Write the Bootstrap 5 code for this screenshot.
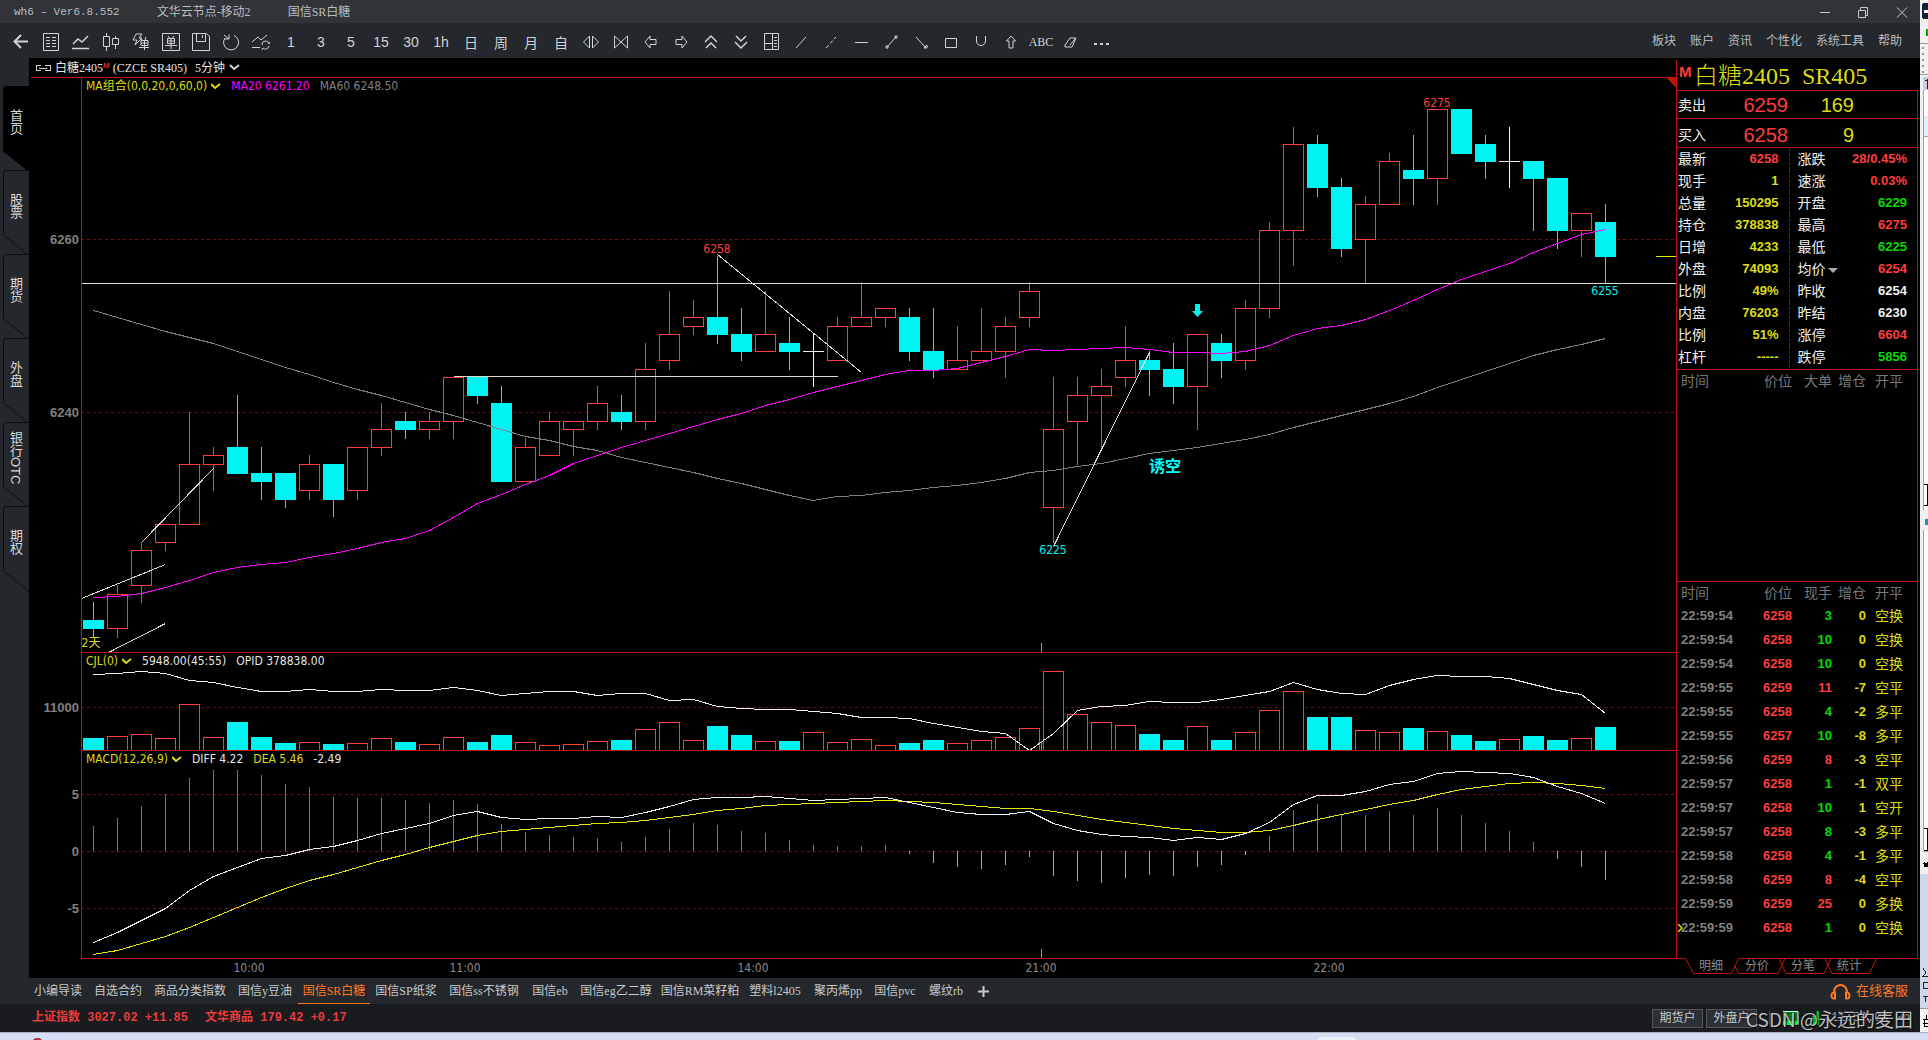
<!DOCTYPE html>
<html lang="zh-CN">
<head>
<meta charset="utf-8">
<meta name="viewport" content="width=device-width, initial-scale=1">
<title>wh6 - 国信SR白糖</title>
<link href="https://cdn.jsdelivr.net/npm/bootstrap@5.3.0/dist/css/bootstrap.min.css" rel="stylesheet">
<style>
:root{--line:#be140a;--up:#ff3c3c;--dn:#00f3f3;--ylw:#dcdc14;--grn:#00dc00;--song:"Liberation Serif","Noto Sans CJK SC",serif;--tah:"DejaVu Sans Condensed","Noto Sans CJK SC",sans-serif;--ari:"Liberation Sans","Noto Sans CJK SC",sans-serif}
html,body{height:100%}
body{background:#d5def4;font-family:var(--song);font-size:12px;line-height:16px;color:#c8c8c8;overflow:hidden}
button{background:none;border:0;padding:0;color:inherit;font:inherit}
a{color:inherit;text-decoration:none}
svg{display:block}
.ico{fill:none;stroke:#d2d2d2;stroke-width:1}
.titlebar{height:23px;background:#303338;color:#b9bcc0}
.titlebar .ttl{padding-left:14px;gap:37px}
.titlebar .ver{font:11px/16px "Liberation Mono",monospace}
.toolbar-wh{height:35px;background:#24272b}
.tools{padding:3px 0 0 6px}
.tools button{width:30px;height:30px;display:flex;align-items:center;justify-content:center;color:#d2d2d2;font:14px/16px "Noto Sans CJK SC",sans-serif}
.tools .num{font:14px/16px "Liberation Sans",sans-serif}
.menus{gap:14px;padding-right:18px;color:#b9bcc0}
.side{width:29px;background:#24272b;padding-top:28px;flex:none}
.side button{width:26px;height:84px;margin-left:3px;position:relative;display:block}
.side button span{position:absolute;left:0;top:0;width:24px;height:72px;display:flex;align-items:center;justify-content:center;writing-mode:vertical-rl;font:13px/24px var(--ari);color:#d8d8d8}
.side svg{overflow:visible}
.stage{background:#000}
.contract{height:19px;padding-left:6px;color:#e6e6e6}
.contract .sup-m{font:bold 8px/8px var(--ari);color:#c83232;align-self:flex-start;margin:4px 3px 0 0}
.contract button{margin-left:8px}
.panel-k{position:relative;min-height:0;font-family:var(--tah)}
.panel-k>svg{position:absolute;inset:0;width:100%;height:100%}
.legend-k{position:absolute;left:57px;top:1px;gap:10px;line-height:16px;color:#e6e6e6}
.y{color:var(--ylw)}.r{color:var(--up)}.g{color:var(--grn)}.w{color:#f0f0f0}
.timeaxis{height:20px;flex:none;position:relative}
.timeaxis svg{width:100%;height:20px}
.ax{font:bold 13px "Liberation Sans",sans-serif;fill:#808080}
.tx{font:12px "DejaVu Sans Condensed","Noto Sans CJK SC",sans-serif}
.quote{width:244px;flex:none}
.qbox{border-left:1px solid var(--line);margin-top:2px;width:242px}
.qname{height:30px;padding-left:2px;color:var(--ylw);font-size:24px;line-height:32px;font-weight:300;white-space:nowrap}
.qname b{font:bold 15px/24px "Liberation Sans",sans-serif;color:var(--up);width:15px}
.frame-r{border-top:1px solid var(--line);border-right:1px solid var(--line)}
.ask{padding-left:1px;font:14px/16px var(--ari);color:#f0f0f0}
.ask output{font-size:20px;text-align:right}
.ask .p{width:82px}.ask .v{width:66px}
.lab,.flds,.ticks{font:14px/16px var(--ari)}
.flds,.ticks{width:100%;table-layout:fixed;border-collapse:collapse;color:#f0f0f0}
.flds{height:220px}
.flds th,.flds td,.ticks th,.ticks td{padding:0;font-weight:normal;white-space:nowrap}
.flds th{padding-left:1px}
.flds td{text-align:right;font-weight:bold;font-size:13px}
.flds td:nth-child(2){padding-right:10px;border-right:1px dashed #b40000}
.flds td:last-child{padding-right:10px}
.flds th:nth-child(3){padding-left:8px}
.tri{display:inline-block;border:5px solid transparent;border-top-color:#aaa;border-bottom:0;margin:0 0 1px 2px}
.ticks thead th{color:#787878;height:22px;text-align:right}
.ticks thead th:first-child,.ticks thead th:last-child{text-align:left}
.ticks tbody td{height:24px;text-align:right;font-weight:bold;font-size:13px;position:relative}
.ticks tbody td:first-child{text-align:left;color:#808080}
.ticks tr>:first-child{padding-left:4px}
.ticks tr>:last-child{padding-left:9px}
.ticks tbody td:last-child{text-align:left;font-weight:normal;font-size:14px;color:var(--ylw)}
.cur-m{position:absolute;left:0;top:8px}
.dtabs{height:20px;position:relative;padding-left:12px;color:#8c8c8c;flex:none}
.dtabs svg{position:absolute;left:0;top:0}
.dtabs button{width:46px;height:16px;position:relative}
.pages{height:26px;background:#24272b;padding-left:28px;flex:none}
.pages a{text-align:center;line-height:26px;height:26px;white-space:nowrap}
.pages a.on{color:#ff7a1e;border-bottom:1px solid #ff7a1e}
.service{color:#ff7a1e;font:13px/16px var(--ari);gap:5px;padding-right:12px}
.status{height:28px;background:#1a1b1f;padding-left:32px;gap:17px;flex:none;font:bold 12px/16px "Liberation Mono","Noto Sans CJK SC",monospace;color:#e63c3c;position:relative}
.status .accts{gap:3px}
.acct{width:51px;height:19px;border:1px solid #55575a!important;background:#2c3036!important;color:#c8c8c8!important;font:12px/16px var(--ari)!important}
.conn{width:160px;gap:12px;padding-left:9px;font:12px/16px "Liberation Mono",monospace;color:#8f9db8}
.mark-wm{position:absolute;right:7px;top:0;font:19px/30px "Noto Sans CJK SC",sans-serif;color:rgba(255,255,255,.72);text-shadow:1px 1px 1px #000;white-space:nowrap}
.behind{width:8px;flex:none;background:#fff;overflow:hidden}
.taskbar{height:8px;flex:none;border-top:1px solid #a8b0c0;background:#d5def4;position:relative;overflow:hidden}
.taskbar i{position:absolute}
</style>
</head>
<body class="d-flex flex-column">
<div class="d-flex flex-fill" style="min-height:0">
<div class="d-flex flex-column flex-fill" style="min-width:0">
  <header class="titlebar d-flex align-items-center justify-content-between">
    <div class="ttl d-flex"><span class="ver">wh6 – Ver6.8.552</span><span>文华云节点-移动2</span><span>国信SR白糖</span></div>
    <svg class="ico me-2" width="96" height="20" style="stroke:#c8c8c8"><path d="M4 10.5h10M42.5 8.500h7v7h-7zM44.500 8V5.500h7v8H50M81 5.500l10 10M91 5.500l-10 10"/></svg>
  </header>
  <nav class="toolbar-wh d-flex align-items-center justify-content-between">
    <div class="tools d-flex" id="tools"></div>
    <div class="menus d-flex"><a href="#">板块</a><a href="#">账户</a><a href="#">资讯</a><a href="#">个性化</a><a href="#">系统工具</a><a href="#">帮助</a></div>
  </nav>
  <div class="d-flex flex-fill" style="min-height:0">
    <aside class="side" id="side"></aside>
    <main class="stage d-flex flex-column flex-fill" style="min-width:0">
      <div class="contract d-flex align-items-center">
        <svg class="ico" width="20" height="12" shape-rendering="crispEdges"><path d="M6 3.500H1v5h5M10 3.500h5v5h-5M4 6h8"/></svg>
        <span>白糖2405</span><span class="sup-m">M</span><span>(CZCE SR405)</span>
        <button class="d-flex align-items-center">5分钟<svg class="ico ms-1" width="12" height="8" style="stroke-width:2"><path d="M1 1l4 4 5-4"/></svg></button>
      </div>
      <div class="panel-k" style="flex:575 1 0"><svg id="price"></svg>
        <div class="legend-k d-flex"><span class="y d-flex align-items-center">MA组合(0,0,20,0,60,0)<svg class="ico ms-1" width="10" height="7" style="stroke:#dcdc14;stroke-width:2"><path d="M0 1l4 4 5-4"/></svg></span><span style="color:#f0f">MA20 6261.20</span><span style="color:#808080">MA60 6248.50</span></div>
      </div>
      <div class="panel-k" style="flex:98 1 0"><svg id="vol"></svg>
        <div class="legend-k d-flex"><span class="y d-flex align-items-center">CJL(0)<svg class="ico ms-1" width="10" height="7" style="stroke:#dcdc14;stroke-width:2"><path d="M0 1l4 4 5-4"/></svg></span><span>5948.00(45:55)</span><span>OPID 378838.00</span></div>
      </div>
      <div class="panel-k" style="flex:208 1 0"><svg id="macd"></svg>
        <div class="legend-k d-flex"><span class="y d-flex align-items-center">MACD(12,26,9)<svg class="ico ms-1" width="10" height="7" style="stroke:#dcdc14;stroke-width:2"><path d="M0 1l4 4 5-4"/></svg></span><span>DIFF 4.22</span><span class="y">DEA 5.46</span><span>-2.49</span></div>
      </div>
      <div class="timeaxis"><svg id="taxis"></svg></div>
    </main>
    <section class="quote stage d-flex flex-column">
      <div class="qbox d-flex flex-column flex-fill" style="min-height:0">
        <div class="qname d-flex"><b>M</b><span>白糖2405&nbsp; SR405</span></div>
        <div class="ask frame-r d-flex align-items-center" style="height:28px"><span>卖出</span><output class="p r">6259</output><output class="v y">169</output></div>
        <div class="ask frame-r d-flex align-items-center pt-1" style="height:29px"><span>买入</span><output class="p r">6258</output><output class="v y">9</output></div>
        <div class="frame-r" style="height:222px">
          <table class="flds"><colgroup><col style="width:40px"><col style="width:72px"><col style="width:50px"><col></colgroup><tbody id="flds"></tbody></table>
        </div>
        <div class="frame-r flex-fill">
          <table class="ticks"><colgroup><col style="width:75px"><col style="width:40px"><col style="width:40px"><col style="width:34px"><col></colgroup><thead><tr><th>时间</th><th>价位</th><th>大单</th><th>增仓</th><th>开平</th></tr></thead></table>
        </div>
        <div class="frame-r" style="height:377px">
          <table class="ticks"><colgroup><col style="width:75px"><col style="width:40px"><col style="width:40px"><col style="width:34px"><col></colgroup><thead><tr><th>时间</th><th>价位</th><th>现手</th><th>增仓</th><th>开平</th></tr></thead><tbody id="ticks"></tbody></table>
        </div>
      </div>
      <div class="dtabs d-flex">
        <svg width="244" height="20" fill="none" stroke="#be140a"><path d="M0 .5H9.500L17.500 15.500H55.500L62.500.5H241.500M58.500 7.500L62.500 15.500H102L109 .5M103 .5L110 15.500H148L155 .5M149 .5L156 15.500H193.500L200.500.5"/></svg>
        <button>明细</button><button>分价</button><button>分笔</button><button>统计</button>
      </div>
    </section>
  </div>
  <nav class="pages d-flex align-items-center"><div class="d-flex" id="pages"></div>
    <a href="#" class="service d-flex align-items-center ms-auto"><svg width="21" height="17" fill="none" stroke="#ff7a1e" stroke-width="2"><path d="M4 10V9a6.500 7 0 0 1 13 0v1M5 9.500c-4-1-5 6-1 6h1zM16 9.500c4-1 5 6 1 6h-1z"/></svg><span>在线客服</span></a>
  </nav>
  <footer class="status d-flex align-items-center">
    <span>上证指数 3027.02 +11.85</span><span>文华商品 179.42 +0.17</span>
    <div class="accts d-flex ms-auto align-items-center"><button class="acct">期货户</button><button class="acct">外盘户</button>
      <div class="conn d-flex align-items-center"><svg width="50" height="16"><path d="M.5 1v14" stroke="#e00"/><rect x="14" y="1" width="15" height="14" fill="#0a7a1e"/><path d="M14 1.500h15v13" fill="none" stroke="#dfe" /><path d="M14 13h14" stroke="#0f3" stroke-width="4"/><path d="M16 3v9M19 3v9M22 3v9M25 3v9" stroke="#031" stroke-dasharray="1 2"/><path d="M45 15V6M49 15V1" stroke="#0b3" stroke-width="3"/></svg><span>11:59:04 wh</span></div></div>
    <div class="mark-wm">CSDN @永远的麦田</div>
  </footer>
</div>
<div class="behind"><svg width="8" height="1032" shape-rendering="crispEdges">
  <rect width="8" height="77" fill="#f0f0f0"/><rect x="2" y="3" width="9" height="16" rx="3" fill="#14203c"/><path d="M4 11h4" stroke="#fff" stroke-width="3"/><path d="M7 29v7" stroke="#0a0" stroke-width="2"/>
  <path d="M0 43.500h8M0 74.500h8M3.500 90v760M3 136.500h5M0 851.500h8" stroke="#a0a0a0"/><path d="M3 47v26" stroke="#999" stroke-width="2" stroke-dasharray="2 4"/>
  <rect width="3" height="775" y="77" fill="#f0f0f0"/><rect x="3" y="77" width="5" height="13" fill="#c4d0e2"/><path d="M7 79v10M5 80h3" stroke="#222"/><rect x="4" y="116" width="4" height="20" fill="#e0efff"/>
  <path d="M4 484h3v21H4M4 828h3v22H4" fill="none" stroke="#000"/><rect y="510" width="8" height="20" fill="#f0f0f0"/><rect x="5" y="519" width="3" height="6" fill="#28c"/>
  <rect y="852" width="8" height="22" fill="#f0f0f0"/><path d="M4 863l4 4M4 867l4-4" stroke="#000" stroke-width="2"/><rect y="874" width="8" height="134" fill="#ccd9e9"/>
  <path d="M3 968l3 5-3 3h5M3 982h5v6H3zM3 996h5M5 996v6" fill="none" stroke="#222"/><rect y="1008" width="8" height="24" fill="#f4f4f4"/><path d="M0 1008.500h8" stroke="#999"/><path d="M3 1019h5M3 1023h5M4 1019v7h4M6 1015v5" fill="none" stroke="#000"/>
</svg></div>
</div>
<div class="taskbar"><i style="left:32px;top:5px;width:11px;height:10px;border-radius:5px;background:#b03030"></i><i style="left:1318px;top:4px;width:38px;height:8px;border-radius:4px;background:#eef2fb"></i></div>
<script src="https://cdn.jsdelivr.net/npm/bootstrap@5.3.0/dist/js/bootstrap.bundle.min.js"></script>
<script>
const $=id=>document.getElementById(id);
/* toolbar */
const P=(d,x='')=>`<svg class="ico" width="18" height="18" viewBox="0 0 18 18" ${x}><path d="${d}"/></svg>`;
const T=t=>({t});
const tools=[
 ['返回',P('M16 8.500H3M9 2L2.500 8.500 9 15','style="stroke-width:2"')],
 ['报价',P('M1.500.5h15v17h-15zM4 4.500h4M10 4.500h4M4 7.500h4M10 7.500h4M4 10.500h4M10 10.500h4M4 13.500h4M10 13.500h4')],
 ['分时',P('M1 11l5-5 4 3 6-6M0 15.500h17','style="stroke-width:1.500"')],
 ['K线',P('M4.500 0v3M4.500 14v4M1.500 3.500h6v10h-6zM13.500 3v3M13.500 11v5M10.500 5.500h6v6h-6z')],
 ['闪电',P('M4 1h6L7 5h3l-7 7 2-5H1zM9 5l1 2M14 4l-1 3M9 7.500h7v5H9zM9 10h7M12.500 7v10M7 14.500h10')],
 ['下单',P('M.5.5h17v17H.5zM6 3l1.500 2M12 3l-1.500 2M5.500 5.500h7v5h-7zM5 8h8M9 5v11M3 12.500h12')],
 ['保存',P('M.5.500h14l3 3v14H.5zM4.500.5v8h9v-8M10.500 2v3')],
 ['刷新',P('M7 1.500v4.500H2M2 2l5 4M12 2.500a7.500 7.500 0 1 1-9 2.500')],
 ['恢复',P('M0 9l6-5 3 3 6-5M0 14.500h8M10 12a3.500 3.500 0 0 1 7-1l1-2M17 13a3.500 3.500 0 0 1-6 2l-1 2')],
 T('1'),T('3'),T('5'),T('15'),T('30'),T('1h'),T('日'),T('周'),T('月'),T('自'),
 ['放大',P('M7.500 3v12L1.500 9zM10.500 3v12l6-6z')],
 ['缩小',P('M2.500 3v12l6.500-6zM15.500 3v12L9 9z')],
 ['左移',P('M3 9l5-6v3.500h6v5H8V15z')],
 ['右移',P('M15 9l-5-6v3.500H4v5h6V15z')],
 ['上翻',P('M3 9l6-6 6 6M4 15l5-5 5 5','style="stroke-width:1.500"')],
 ['下翻',P('M3 9l6 6 6-6M4 3l5 5 5-5','style="stroke-width:1.500"')],
 ['布局',P('M2.500.5h14v16h-14zM10.500 0v17M2 10.500h8M12 4.500h3M12 7.500h3M12 10.500h3M12 13.500h3')],
 ['直线',P('M4 15L14 4')],
 ['虚线',P('M4 15L14 4','stroke-dasharray="4 2"')],
 ['水平线',P('M3 9.500h13')],
 ['线段',P('M5 14L14 4'+'M4 13h2v2H4zM13 3h2v2h-2z')],
 ['射线',P('M4 4l10 11M12 15h3v-3z')],
 ['矩形',P('M3.500 5.500h11v9h-11z')],
 ['弧线',P('M4.500 3v5c0 6 9 6 9 0V3')],
 ['上箭头',P('M9 3l4.500 5H11v7H7V8H4.500z')],
 T('ABC'),
 ['橡皮',P('M3 12l5-7h6l-4 9H3zM8 12l5-6')],
 ['更多',P('M2 11h3M8 11h3M14 11h3','style="stroke-width:2"')]
];
$('tools').innerHTML=tools.map(t=>t.t?`<button class="${/^[\dh]/.test(t.t)?'num':''}"${t.t=='ABC'?' style="font:12px Liberation Serif,serif"':''}>${t.t}</button>`:`<button aria-label="${t[0]}">${t[1]}</button>`).join('');
$('side').innerHTML=['首页','股票','期货','外盘','银行OTC','期权'].map((t,i)=>`<button><svg width="26" height="87"><path d="M26 .5H3Q.5.5.5 3V65L26 85.500" fill="${i?'#24272b':'#000'}" stroke="${i?'#0c0d0f':'#000'}"/></svg><span>${t}</span></button>`).join('');
/* page tabs: 12px per Han character, 6px per Latin one */
const names=['小编导读','自选合约','商品分类指数','国信y豆油','国信SR白糖','国信SP纸浆','国信ss不锈钢','国信eb','国信eg乙二醇','国信RM菜籽粕','塑料l2405','聚丙烯pp','国信pvc','螺纹rb'];
$('pages').innerHTML=names.map(n=>{let w=12;for(const c of n)w+=c.charCodeAt(0)>255?12:6;return `<a href="#" class="${n=='国信SR白糖'?'on':''}" style="width:${w}px">${n}</a>`}).join('')+'<a href="#" aria-label="添加" class="d-flex align-items-center ms-2"><svg width="11" height="11"><path d="M0 5.500h11M5.500 0v11" stroke="#c8c8c8" stroke-width="2"/></svg></a>';
/* quote fields */
$('flds').innerHTML=[
['最新','6258','r','涨跌','28/0.45%','r'],['现手','1','y','速涨','0.03%','r'],['总量','150295','y','开盘','6229','g'],['持仓','378838','y','最高','6275','r'],['日增','4233','y','最低','6225','g'],['外盘','74093','y','均价<span class="tri"></span>','6254','r'],['比例','49%','y','昨收','6254','w'],['内盘','76203','y','昨结','6230','w'],['比例','51%','y','涨停','6604','r'],['杠杆','-----','y','跌停','5856','g']
].map(f=>`<tr><th>${f[0]}</th><td class="${f[2]}">${f[1]}</td><th>${f[3]}</th><td class="${f[5]}">${f[4]}</td></tr>`).join('');
$('ticks').innerHTML=['54 6258 g3 0 空换','54 6258 g10 0 空换','54 6258 g10 0 空换','55 6259 r11 -7 空平','55 6258 g4 -2 多平','55 6257 g10 -8 多平','56 6259 r8 -3 空平','57 6258 g1 -1 双平','57 6258 g10 1 空开','57 6258 g8 -3 多平','58 6258 g4 -1 多平','58 6259 r8 -4 空平','59 6259 r25 0 多换','59 6258 g1 0 空换'].map((s,i)=>{const a=s.split(' ');return `<tr><td>${i==13?'<svg class="cur-m" width="6" height="8" fill="none" stroke="#dcdc14" stroke-width="1.500"><path d="M1 0l4 4-4 4"/></svg>':''}22:59:${a[0]}</td><td class="r">${a[1]}</td><td class="${a[2][0]}">${a[2].slice(1)}</td><td class="y">${a[3]}</td><td>${a[4]}</td></tr>`}).join('');

/* candles: colour, body top, body bottom, high, low (offset from 6200) */
const K=`c16,15,18,14 r19,15,20,14 r24,20,25,18 r27,25,27,24 r34,27,40,27 r35,34,36,31 c36,33,42,33 c33,32,36,30 c33,30,33,29 r34,31,35,30 c34,30,34,28 r36,31,36,30 r38,36,41,35 c39,38,40,37 r39,38,40,37 r44,39,44,37 c44,42,44,41 c41,32,43,32 r36,32,37,32 r39,35,40,35 r39,38,39,35 r41,39,43,38 c40,39,42,38 r45,39,48,38 r49,46,54,45 r51,50,53,49 c51,49,58,48 c49,47,52,46 r49,47,54,47 c48,47,51,45 w47,47,49,43 r50,46,51,46 r51,50,55,50 r52,51,52,50 c51,47,52,46 c47,45,52,44 r46,45,50,45 r47,46,52,46 r50,47,51,44 r54,51,55,50 r38,29,44,25 r42,39,44,34 r43,42,45,36 r46,44,50,43 c46,45,47,42 c45,43,48,41 r49,43,49,38 c48,46,49,44 r52,46,53,45 r61,52,62,51 r71,61,73,57 c71,66,72,65 c66,59,67,58 r64,60,65,55 r69,64,70,64 c68,67,72,64 r75,67,75,64 c75,70,75,70 c71,69,72,67 w69,69,73,66 c69,67,69,61 c67,61,67,59 r63,61,63,58 c62,58,64,55`.split(' ').map(s=>[s[0],...s.slice(1).split(',').map(Number)]);
const L=s=>s.split(',').map(Number);
const ma20=L('597,596,593,587,580,572,567,564,562,557,553,548,542,538,530,517,503,494,484,475,463,455,447,440,433,426,419,413,405,399,392,386,380,374,370,370,368,362,356,349,350,349,348,347,349,352,352,353,351,345,335,328,325,319,310,300,289,279,271,263,252,243,234,229');
const ma60=L('310,317,324,331,337,343,351,359,367,374,382,389,395,402,409,415,422,429,436,440,446,450,457,462,467,472,478,483,489,495,500,496,495,492,490,487,485,482,478,472,470,466,463,458,453,450,447,443,439,434,427,421,415,409,403,396,387,379,371,363,355,349,344,338');
const vol=L('12,14,16,12,46,13,28,13,7,8,6,7,12,8,6,13,8,15,8,5,6,9,10,21,28,10,24,15,9,9,18,8,11,5,7,10,7,10,13,22,79,36,28,25,16,10,24,10,18,40,59,33,33,20,18,22,19,15,9,11,14,10,12,23');
const opid=L('674,673,671,673,680,682,687,691,691,689,691,691,689,690,690,687,690,695,693,691,691,695,693,693,700,699,706,708,709,709,711,713,717,717,718,723,727,731,733,750,733,710,706,705,701,702,702,699,695,691,682,689,693,694,685,679,675,676,676,678,684,690,694,713');
const hist=L('826,818,806,794,778,770,770,775,784,787,797,798,798,800,803,800,804,824,832,835,837,838,842,837,829,823,825,831,833,840,845,846,846,845,853,862,866,868,864,856,875,880,882,877,874,875,866,864,854,836,810,804,815,815,811,815,808,815,823,831,842,858,866,879');
const diff=L('942,932,920,908,890,876,867,858,855,849,846,840,833,828,823,815,811,817,819,818,818,816,817,812,806,799,797,797,796,798,800,799,798,797,802,807,812,814,814,811,823,830,834,836,837,840,837,839,833,822,804,795,795,791,784,781,773,771,772,773,777,786,793,803');
const dea=L('954,950,943,936,927,917,907,897,888,880,874,867,860,854,847,841,835,831,829,827,825,823,822,820,817,814,810,808,805,804,803,802,801,800,801,802,804,806,808,808,811,815,819,822,825,828,830,832,832,830,825,819,814,809,804,800,794,789,786,783,782,783,785,788');
const AX=52,RED='#be140a',UP='#ff3c3c',DN='#00f3f3',CR='shape-rendering="crispEdges"';
const X=i=>64+24*i;
function draw(){
 const W=$('price').clientWidth;
 const ln=(x1,y1,x2,y2,c,e='')=>`<line x1="${x1}" y1="${y1}" x2="${x2}" y2="${y2}" stroke="${c}" ${CR} ${e}/>`;
 const grid=(y,t)=>ln(AX,y,W,y,'#960000','stroke-dasharray="3 3"')+`<text class="ax" x="50" y="${y+4.5}" text-anchor="end">${t}</text>`;
 const poly=(a,f,c)=>`<polyline points="${a.map((v,i)=>(X(i)+.5)+','+(f(v)+.5)).join(' ')}" fill="none" stroke="${c}" ${CR}/>`;
 const frame=(x,H)=>ln(x,.5,W,.5,RED)+ln(AX+.5,0,AX+.5,H,RED);
 const box=(i,y1,y2,c)=>c=='r'?`<rect x="${X(i)-10+.5}" y="${y1+.5}" width="20" height="${Math.max(y2-y1,1)}" fill="#000" stroke="${UP}" ${CR}/>`:`<rect x="${X(i)-10}" y="${y1}" width="21" height="${Math.max(y2-y1+1,1)}" fill="${DN}" ${CR}/>`;
 /* price */
 let H=$('price').clientHeight,k=H/575,top=77,f=v=>Math.round((v-top)*k),p=v=>Math.round((162+(60-v)*8.65)*k),s='';
 s+=grid(p(60)+.5,'6260')+grid(p(40)+.5,'6240');
 K.forEach(([c,a,b,h,l],i)=>{const col=c=='r'?UP:c=='c'?DN:'#f0f0f0',x=X(i)+.5;
  s+=ln(x,p(h),x,p(l)+1,col);
  s+=c=='w'?ln(X(i)-10,p(a)+.5,X(i)+11,p(a)+.5,col):box(i,p(a),p(b),c)});
 s+=poly(ma60,f,'#808080')+poly(ma20,f,'#ff00ff');
 const dl=(a,b,c,d)=>ln(a-28.5,f(b)+.5,c-28.5,f(d)+.5,'#dcdcd0');
 s+=ln(AX,f(283)+.5,W,f(283)+.5,'#dcdcd0')+dl(453,376,837,376)+dl(717,254,861,372)+dl(81,598,165,564)+dl(108,652,165,623)+dl(141,542,213,468)+dl(1053,546,1149,352);
 s+=ln(W-20,f(256)+.5,W,f(256)+.5,'#e6e600');
 s+=`<path d="M1166 ${f(304)}h5v7h3l-5.500 6-5.500-6h3z" fill="${DN}"/>`;
 const tx=(x,y,t,c)=>`<text class="tx" x="${x-29}" y="${f(y)}" text-anchor="middle" fill="${c}">${t}</text>`;
 s+=tx(717,253,'6258',UP)+tx(1437,107,'6275',UP)+tx(1053,554,'6225',DN)+tx(1605,295,'6255',DN)+tx(91,647,'2天','#dcdc14');
 s+=`<text x="1120" y="${f(472)}" fill="#0ff" style="font:bold 16px 'Noto Sans CJK SC',sans-serif">诱空</text>`;
 s+=ln(1012.5,H-9,1012.5,H,'#999')+frame(2,H)+`<path d="M${W-10} 0H${W}V11z" fill="${RED}"/>`;
 $('price').innerHTML=s;
 /* volume */
 H=$('vol').clientHeight;k=H/98;top=652;
 s=grid(f(707)+.5,'11000');
 vol.forEach((v,i)=>{const up=K[i][0]!='c';s+=box(i,H-Math.round(v*k),H,up?'r':'c')});
 s+=poly(opid,f,'#f0f0f0')+ln(1012.5,H-9,1012.5,H,'#999')+frame(AX,H);
 $('vol').innerHTML=s;
 /* macd */
 H=$('macd').clientHeight;k=H/208;top=750;
 s=grid(f(794)+.5,'5')+grid(f(851)+.5,'0')+grid(f(908)+.5,'-5');
 hist.forEach((v,i)=>s+=ln(X(i)+.5,f(851),X(i)+.5,f(v)+(v>851),v<851?UP:DN));
 s+=poly(dea,f,'#e6e600')+poly(diff,f,'#f0f0f0')+ln(1012.5,H-9,1012.5,H,'#999')+frame(AX,H);
 $('macd').innerHTML=s;
 $('taxis').innerHTML=ln(AX,.5,W,.5,RED)+[[6.5,'10:00'],[15.5,'11:00'],[27.5,'14:00'],[39.5,'21:00'],[51.5,'22:00']].map(a=>`<text class="tx" x="${X(a[0])}" y="14" text-anchor="middle" fill="#8c8c8c">${a[1]}</text>`).join('');
}
draw();addEventListener('resize',draw);
</script>
</body>
</html>
